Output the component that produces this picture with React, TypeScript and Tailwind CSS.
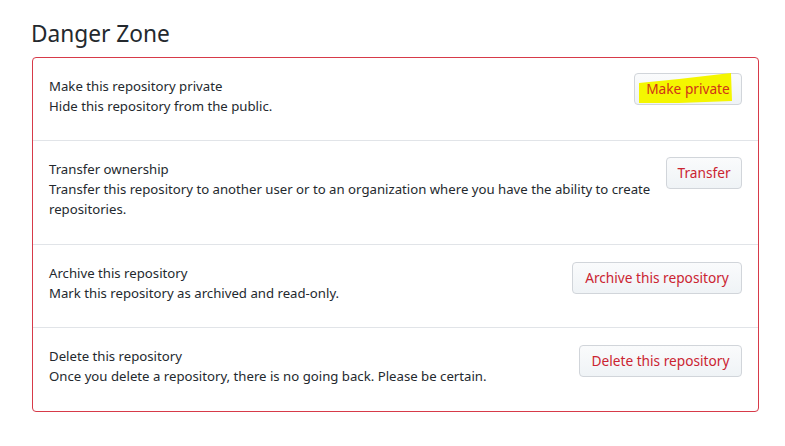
import React from "react";

const font = { fontFamily: '"Noto Sans", "Open Sans", sans-serif' };

function Btn({ children, w, mt }: { children: React.ReactNode; w: string; mt: string }) {
  return (
    <button
      className={`relative h-[32px] ${w} ${mt} shrink-0 rounded-[4px] border border-[#d1d5da] bg-gradient-to-b from-[#fafbfc] to-[#eff3f6] text-[13.7px] text-[#cb2431]`}
    >
      {children}
    </button>
  );
}

function Row({
  title,
  desc,
  btn,
  last,
  pb,
}: {
  title: string;
  desc: React.ReactNode;
  btn: React.ReactNode;
  last?: boolean;
  pb: string;
}) {
  return (
    <div
      className={`flex items-start justify-between gap-4 px-[16px] ${pb} ${
        last ? "" : "border-b border-[#e1e4e8]"
      }`}
    >
      <div className="min-w-0 flex-1 whitespace-nowrap pt-[18px] text-[13.2px] leading-[20px] text-[#24292e]">
        <div>{title}</div>
        <div>{desc}</div>
      </div>
      {btn}
    </div>
  );
}

export default function App() {
  return (
    <div className="min-h-[446px] w-[785px] bg-white" style={font}>
      <div className="pl-[31px] pt-[18px]">
        <h2 className="text-[22.7px] leading-[32px] font-normal text-[#24292e]">Danger Zone</h2>
      </div>
      <div className="ml-[32px] mt-[7px] w-[727px] rounded-[4px] border border-[#d73a49]">
        <Row
          pb="pb-[24px]"
          title="Make this repository private"
          desc="Hide this repository from the public."
          btn={
            <Btn w="w-[108px]" mt="mt-[15px]">
              <svg
                className="absolute left-[4px] top-[-1px]"
                width="94"
                height="32"
                viewBox="0 0 94 32"
              >
                <polygon points="0,10 40,6 92,0 93,28 40,30 0,30" fill="#f4f600" />
              </svg>
              <span className="relative text-[#d03318]">Make private</span>
            </Btn>
          }
        />
        <Row
          pb="pb-[25px]"
          title="Transfer ownership"
          desc={
            <>
              Transfer this repository to another user or to an organization where you have the ability to create
              <br />
              repositories.
            </>
          }
          btn={<Btn w="w-[76px]" mt="mt-[16px]">Transfer</Btn>}
        />
        <Row
          pb="pb-[24px]"
          title="Archive this repository"
          desc="Mark this repository as archived and read-only."
          btn={<Btn w="w-[170px]" mt="mt-[17px]">Archive this repository</Btn>}
        />
        <Row
          pb="pb-[25px]"
          title="Delete this repository"
          desc="Once you delete a repository, there is no going back. Please be certain."
          btn={<Btn w="w-[163px]" mt="mt-[17px]">Delete this repository</Btn>}
          last
        />
      </div>
    </div>
  );
}
